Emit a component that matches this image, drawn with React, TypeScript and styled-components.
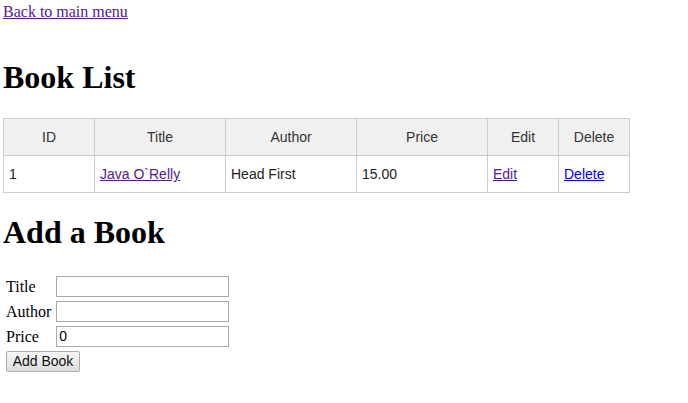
import React from "react";
import styled, { createGlobalStyle } from "styled-components";

const Global = createGlobalStyle`
  body {
    margin: 3px;
    font-family: "Liberation Serif", "Times New Roman", serif;
    font-size: 16px;
    color: #000;
    background: #fff;
  }
`;

const BackLink = styled.a`
  color: #551a8b;
  text-decoration: underline;
  display: inline-block;
  margin-bottom: 17px;
`;

const Heading = styled.h1`
  font-family: "Liberation Serif", "Times New Roman", serif;
  font-size: 32px;
  font-weight: bold;
  margin: 21.44px 0;
`;

const BookTable = styled.table`
  border-collapse: collapse;
  table-layout: fixed;
  width: 626px;
  font-family: "Liberation Sans", Arial, sans-serif;
  font-size: 14px;
`;

const HeadCell = styled.th`
  background: #f0f0f0;
  border: 1px solid #cccccc;
  color: #333333;
  font-weight: normal;
  text-align: center;
  height: 37px;
  padding: 0 5px;
  box-sizing: border-box;
`;

const Cell = styled.td`
  border: 1px solid #cccccc;
  color: #222222;
  text-align: left;
  height: 37px;
  padding: 1px 5px 0;
  box-sizing: border-box;
`;

const CellLink = styled.a<{ $visited?: boolean }>`
  color: ${(p) => (p.$visited ? "#551a8b" : "#0000ee")};
  text-decoration: underline;
`;

const AddForm = styled.form`
  margin-top: 1px;
`;

const FormTable = styled.table`
  border-spacing: 2px;
  border-collapse: separate;
`;

const LabelCell = styled.td`
  padding: 2px 2px 0 1px;
  font-family: "Liberation Serif", "Times New Roman", serif;
  font-size: 16px;
  vertical-align: middle;
`;

const InputCell = styled.td`
  padding: 1px;
`;

const TextInput = styled.input`
  box-sizing: border-box;
  width: 173px;
  height: 21px;
  border: 1px solid #a9a9a9;
  padding: 1px 2px;
  margin: 0;
  font-family: "Liberation Sans", Arial, sans-serif;
  font-size: 14px;
  display: block;
`;

const SubmitButton = styled.button`
  box-sizing: border-box;
  width: 74px;
  height: 21px;
  margin: 0;
  padding: 0 4px;
  border: 1px solid #adadad;
  border-radius: 2px;
  background: linear-gradient(#f6f6f6, #dddddd);
  font-family: "Liberation Sans", Arial, sans-serif;
  font-size: 14px;
  color: #111;
  display: block;
`;

const cols = [91, 131, 131, 131, 71, 71];

export default function App() {
  return (
    <>
      <Global />
      <BackLink href="#">Back to main menu</BackLink>
      <Heading>Book List</Heading>
      <BookTable>
        <colgroup>
          {cols.map((w, i) => (
            <col key={i} style={{ width: w }} />
          ))}
        </colgroup>
        <thead>
          <tr>
            <HeadCell>ID</HeadCell>
            <HeadCell>Title</HeadCell>
            <HeadCell>Author</HeadCell>
            <HeadCell>Price</HeadCell>
            <HeadCell>Edit</HeadCell>
            <HeadCell>Delete</HeadCell>
          </tr>
        </thead>
        <tbody>
          <tr>
            <Cell>1</Cell>
            <Cell>
              <CellLink href="#" $visited>
                Java O`Relly
              </CellLink>
            </Cell>
            <Cell>Head First</Cell>
            <Cell>15.00</Cell>
            <Cell>
              <CellLink href="#" $visited>
                Edit
              </CellLink>
            </Cell>
            <Cell>
              <CellLink href="#">Delete</CellLink>
            </Cell>
          </tr>
        </tbody>
      </BookTable>
      <Heading>Add a Book</Heading>
      <AddForm onSubmit={(e) => e.preventDefault()}>
        <FormTable>
          <tbody>
            <tr>
              <LabelCell>Title</LabelCell>
              <InputCell>
                <TextInput type="text" defaultValue="" />
              </InputCell>
            </tr>
            <tr>
              <LabelCell>Author</LabelCell>
              <InputCell>
                <TextInput type="text" defaultValue="" />
              </InputCell>
            </tr>
            <tr>
              <LabelCell>Price</LabelCell>
              <InputCell>
                <TextInput type="text" defaultValue="0" />
              </InputCell>
            </tr>
            <tr>
              <InputCell colSpan={2}>
                <SubmitButton type="submit">Add Book</SubmitButton>
              </InputCell>
            </tr>
          </tbody>
        </FormTable>
      </AddForm>
    </>
  );
}
